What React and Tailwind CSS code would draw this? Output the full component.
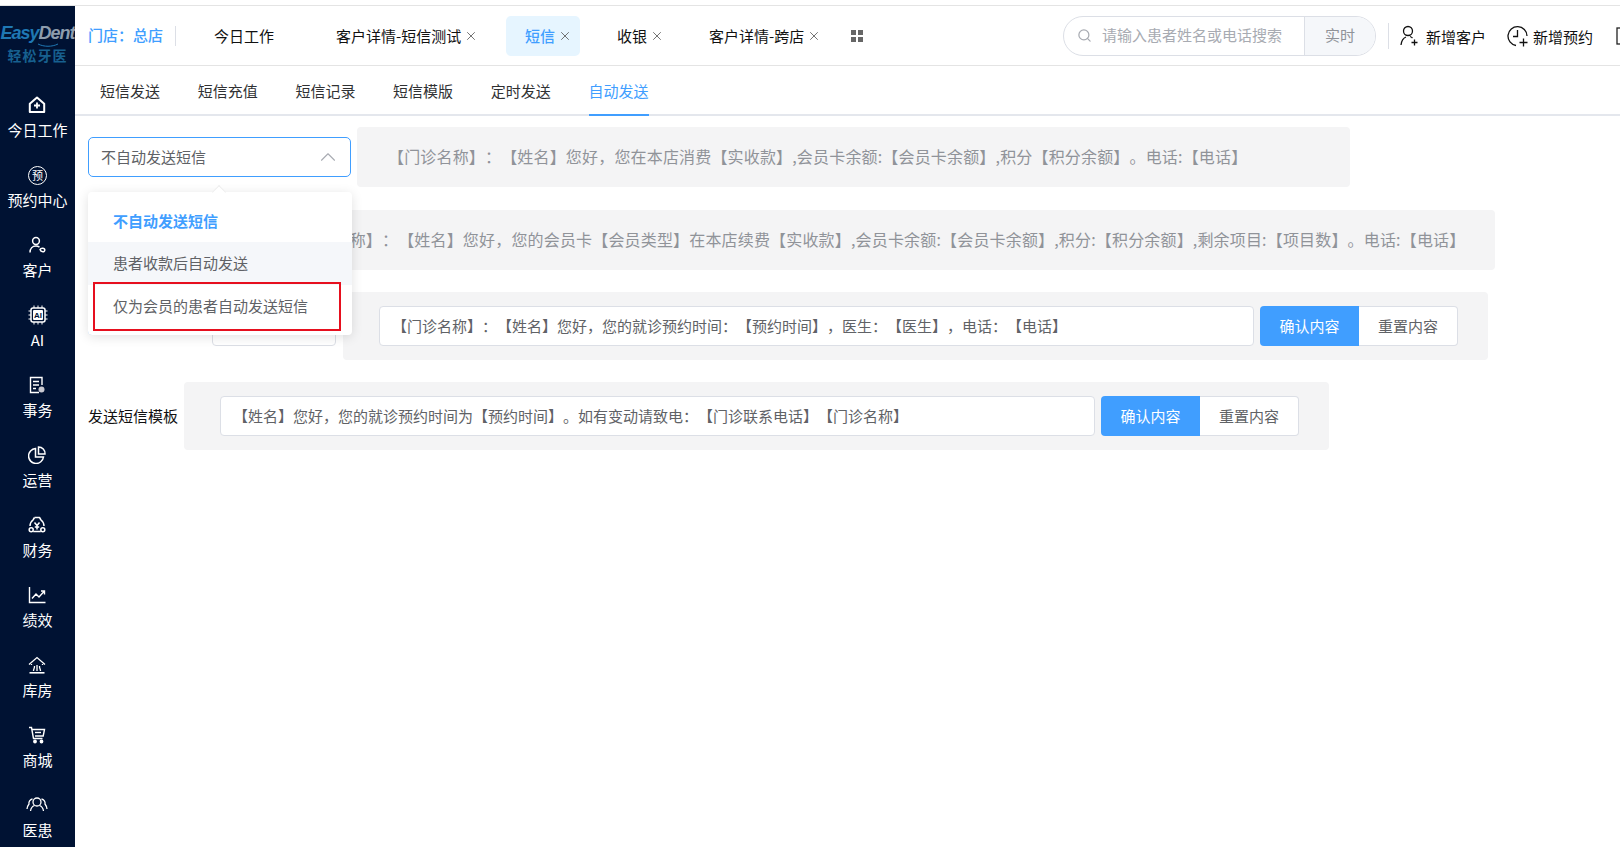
import { X, Search, ChevronUp } from 'lucide-react';

const HomeIcon = () => (
  <svg width="18" height="18" viewBox="0 0 18 18" fill="none" stroke="currentColor" strokeWidth="2">
    <path d="M9 1.500 1.800 7.800V16h14.400V7.800Z" strokeLinejoin="round"/>
    <path d="M9 6.500v6M6 9.500h6" strokeWidth="1.800"/>
  </svg>
);

const BookIcon = () => (
  <span className="w-[19px] h-[19px] rounded-full border border-white text-[11px] leading-[17px] text-center">预</span>
);

const CustomerIcon = () => (
  <svg width="18" height="18" viewBox="0 0 18 18" fill="none" stroke="currentColor" strokeWidth="1.500">
    <circle cx="8" cy="5" r="3.400"/>
    <path d="M2 16.500C2 12.500 4.500 10 8 10c1.500 0 2.500.5 3.500 1.200"/>
    <path d="M12 13.500c.8-1.800 4.800-1.800 4.800.5s-3.800 2.300-4.800-.5Z"/>
  </svg>
);

const AiIcon = () => (
  <svg width="20" height="20" viewBox="0 0 20 20" fill="none" stroke="currentColor">
    <rect x="3" y="3" width="14" height="14" rx="2" strokeWidth="1.500"/>
    <path d="M6 .5V3M10 .5V3M14 .5V3M6 17v2.500M10 17v2.500M14 17v2.500M.5 6H3M.5 10H3M.5 14H3M17 6h2.500M17 10h2.500M17 14h2.500" strokeWidth="1"/>
    <rect x="5" y="5" width="10" height="10" rx="1" fill="currentColor" stroke="none"/>
    <text x="10" y="13.200" textAnchor="middle" fontSize="8" fontWeight="700" fontFamily="Liberation Sans, sans-serif" fill="#001233" stroke="none">AI</text>
  </svg>
);

const TaskIcon = () => (
  <svg width="18" height="18" viewBox="0 0 18 18" fill="none" stroke="currentColor" strokeWidth="1.400">
    <path d="M11 16.500H2.500V1.500H14V9"/>
    <path d="M5 5.500h6M5 9h6M5 12.500h3"/>
    <circle cx="13.500" cy="13.500" r="3" fill="#c8c8d0" stroke="none"/>
  </svg>
);

const PieIcon = () => (
  <svg width="18" height="18" viewBox="0 0 18 18" fill="none" stroke="currentColor" strokeWidth="1.500">
    <path d="M7.500 2.500a7.500 7.500 0 1 0 8 8.500H7.500Z"/>
    <path d="M10.500 1a6.500 6.500 0 0 1 6.500 7h-6.500Z"/>
  </svg>
);

const FinanceIcon = () => (
  <svg width="18" height="18" viewBox="0 0 18 18" fill="none" stroke="currentColor" strokeWidth="1.500">
    <path d="M6.500 1.500h5L13 4c2 1.500 3 3.500 3 6" strokeLinejoin="round"/>
    <path d="M6.500 1.500 5 4c-2 1.500-3 3.500-3 6" strokeLinejoin="round"/>
    <path d="M6.500 6.500 9 9.500l2.500-3M9 9.500V13.500M6.800 11h4.400"/>
    <circle cx="3.200" cy="13.800" r="2"/>
    <circle cx="14.800" cy="13.800" r="2"/>
    <path d="M5.200 15.500h7.600"/>
  </svg>
);

const ChartIcon = () => (
  <svg width="18" height="18" viewBox="0 0 18 18" fill="none" stroke="currentColor" strokeWidth="1.400">
    <path d="M1.500 1v15.500h16"/>
    <path d="M4 12.500 8 8l3 3 5-5.500M13 5h3.500v3.500"/>
  </svg>
);

const StoreIcon = () => (
  <svg width="18" height="18" viewBox="0 0 18 18" fill="none" stroke="currentColor" strokeWidth="1.300">
    <path d="M1 8.500 9 1.500l8 7M3.500 8v1M14.500 8v1"/>
    <path d="M5.500 15c0-2 1.200-2.800 1-5M9 15c0-2.500 0-3.500 0-6M12.500 15c0-2-1.200-2.800-1-5"/>
    <path d="M1.500 16.800h15" strokeWidth="1.600"/>
  </svg>
);

const CartIcon = () => (
  <svg width="18" height="18" viewBox="0 0 18 18" fill="none" stroke="currentColor" strokeWidth="1.400">
    <path d="M1 1.500h2.500l2 11h9"/>
    <path d="M4 3.500h12.500l-1.300 6.500H7"/>
    <path d="M7 6.500h6"/>
    <circle cx="7" cy="15.500" r="1.200" fill="currentColor"/>
    <circle cx="13.500" cy="15.500" r="1.200" fill="currentColor"/>
  </svg>
);

const PeopleIcon = () => (
  <svg width="22" height="18" viewBox="0 0 22 18" fill="none" stroke="currentColor" strokeWidth="1.300">
    <circle cx="11" cy="6" r="4"/>
    <path d="M4.500 15c.5-3.500 2.500-5 4-5.500M17.500 15c-.5-3.500-2.500-5-4-5.500"/>
    <path d="M6.500 3C4 3.500 2.500 6 3 8 1.800 9.500 1.200 11 1 13M15.500 3c2.500.5 4 3 3.500 5 1.200 1.500 1.800 3 2 5"/>
  </svg>
);

const MENU = [
  { label: '今日工作', Icon: HomeIcon },
  { label: '预约中心', Icon: BookIcon },
  { label: '客户', Icon: CustomerIcon },
  { label: 'AI', Icon: AiIcon },
  { label: '事务', Icon: TaskIcon },
  { label: '运营', Icon: PieIcon },
  { label: '财务', Icon: FinanceIcon },
  { label: '绩效', Icon: ChartIcon },
  { label: '库房', Icon: StoreIcon },
  { label: '商城', Icon: CartIcon },
  { label: '医患', Icon: PeopleIcon },
];

const TABS = [
  { label: '今日工作', w: 'w-[102px] pl-[19px]' },
  { label: '客户详情-短信测试', close: true, w: 'w-[169px] pl-[19px]' },
  { label: '短信', close: true, active: true, w: 'w-[74px] pl-[19px]' },
  { label: '收银', close: true, w: 'w-[72px] pl-[17px]' },
  { label: '客户详情-跨店', close: true, w: 'w-[139px] pl-[17px]' },
];

const SUBTABS = ['短信发送', '短信充值', '短信记录', '短信模版', '定时发送', '自动发送'];

function Sidebar() {
  return (
    <aside className="w-[75px] shrink-0 bg-[#001233] text-white flex flex-col items-center overflow-hidden">
      <div className="h-[60px] pt-[17px] flex flex-col items-center w-full">
        <div className="text-[18px] leading-[20px] font-bold italic tracking-[-1px] text-[#1f78b4] whitespace-nowrap font-['Liberation_Sans',sans-serif]">Easy<span className="text-[#8d9cad]">Dent</span></div>
        <svg width="75" height="5" viewBox="0 0 75 5" fill="none" stroke="#1f78b4" strokeWidth="1" className="shrink-0">
          <path d="M38 1c6 3 14 3 20 0"/>
        </svg>
        <div className="text-[14px] leading-[15px] tracking-[1px] font-bold text-[#17608f]">轻松牙医</div>
      </div>
      <nav className="w-full flex flex-col items-center pt-[27px] gap-[19px]">
        {MENU.map(({ label, Icon }) => (
          <div key={label} className="flex flex-col items-center h-[51px]">
            <div className="h-[24px] flex items-center justify-center">
              <Icon/>
            </div>
            <span className="text-[15px] leading-[24px] mt-[1px] whitespace-nowrap">{label}</span>
          </div>
        ))}
      </nav>
    </aside>
  );
}

function TopBar() {
  return (
    <header className="h-[60px] shrink-0 border-b border-[#e4e4e4] flex items-center pl-[13px] overflow-hidden">
      <span className="text-[15px] font-medium text-[#409eff] whitespace-nowrap">门店：总店</span>
      <span className="w-px h-[20px] bg-[#dcdfe6] ml-[12px]"/>
      <div className="flex items-center gap-[20px] ml-[19px]">
        {TABS.map(t => (
          <div key={t.label} className={`${t.w} shrink-0 h-[40px] flex items-center gap-[3px] rounded-[5px] text-[15px] whitespace-nowrap ${t.active ? 'bg-[#e6f5ff] text-[#409eff] font-medium' : 'text-[#111]'}`}>
            <span className="pt-[1px]">{t.label}</span>
            {t.close && <X size={14} strokeWidth={1.400} className="text-[#555] shrink-0"/>}
          </div>
        ))}
        <svg width="12" height="12" viewBox="0 0 12 12" fill="#666" className="shrink-0">
          <rect width="5" height="5"/>
          <rect x="7" width="5" height="5"/>
          <rect y="7" width="5" height="5"/>
          <rect x="7" y="7" width="5" height="5"/>
        </svg>
      </div>
      <div className="ml-auto flex items-center shrink-0 mr-[-14px]">
        <div className="w-[313px] h-[40px] rounded-[20px] border border-[#dcdfe6] flex items-center overflow-hidden">
          <Search size={15} className="text-[#a8abb2] ml-[13px]"/>
          <span className="flex-1 ml-[10px] text-[15px] text-[#a8abb2]">请输入患者姓名或电话搜索</span>
          <span className="w-[71px] h-full bg-[#f5f7fa] border-l border-[#dcdfe6] text-[15px] leading-[36px] text-center text-[#909399]">实时</span>
        </div>
        <span className="w-px h-[26px] bg-[#dcdfe6] ml-[12px]"/>
        <div className="flex items-center gap-[7px] ml-[11px] text-[15px] text-[#111] whitespace-nowrap">
          <svg width="19" height="21" viewBox="0 0 19 21" fill="none" stroke="currentColor" strokeWidth="1.300">
            <circle cx="8" cy="6" r="4.500"/>
            <path d="M1 20c.5-4.500 2.500-7 5-8M10 11.500c1 .3 1.800.8 2.500 1.500"/>
            <path d="M14.500 14.500v6M11.500 17.500h6"/>
          </svg>
          <span className="pt-[3px]">新增客户</span>
        </div>
        <div className="flex items-center gap-[3px] ml-[21px] text-[15px] text-[#111] whitespace-nowrap">
          <svg width="23" height="22" viewBox="0 0 23 22" fill="none" stroke="currentColor" strokeWidth="1.300">
            <path d="M9 20.500a9.500 9.500 0 1 1 11-9.500"/>
            <path d="M10.500 5v6.500H6"/>
            <path d="M16.500 13.500v8M12.500 17.500h8"/>
          </svg>
          <span className="pt-[3px]">新增预约</span>
        </div>
        <svg width="18" height="18" viewBox="0 0 18 18" fill="none" stroke="#222" strokeWidth="1.300" className="ml-[23px]">
          <rect x="1" y="1" width="16" height="16"/>
          <path d="M4 6h10M4 10h6"/>
        </svg>
      </div>
    </header>
  );
}

function SubTabs() {
  return (
    <div className="h-[50px] shrink-0 border-b-2 border-[#e4e7ed] flex pl-[25px] gap-[37.7px] text-[15px] text-[#303133]">
      {SUBTABS.map((s, i) => (
        <div key={s} className={`h-[50px] leading-[49px] whitespace-nowrap ${i === 5 ? 'text-[#409eff] border-b-2 border-[#409eff]' : ''}`}>{s}</div>
      ))}
    </div>
  );
}

function Preview({ className, children }) {
  return <div className={`h-[60px] pb-[2px] rounded-[4px] bg-[#f4f4f5] flex items-center text-[16px] tracking-[0.17px] text-[#909399] whitespace-nowrap ${className}`}>{children}</div>;
}

function Editor({ value, className }) {
  return (
    <div className={`w-[1145px] h-[68px] shrink-0 rounded-[4px] bg-[#f4f4f5] flex items-center pl-[36px] ${className}`}>
      <div className="w-[875px] h-[40px] bg-white border border-[#dcdfe6] rounded-[4px] flex items-center px-[12px] text-[15px] text-[#606266] whitespace-nowrap">{value}</div>
      <button className="ml-[6px] w-[99px] h-[40px] bg-[#409eff] text-white text-[15px] rounded-l-[4px]">确认内容</button>
      <button className="w-[99px] h-[40px] bg-white border border-[#dcdfe6] border-l-0 text-[#606266] text-[15px] rounded-r-[4px]">重置内容</button>
    </div>
  );
}

function Dropdown() {
  return (
    <div className="absolute left-[88px] top-[192px] w-[264px] h-[143px] bg-white rounded-[4px] shadow-[0_2px_12px_rgba(0,0,0,0.12)] pt-[7px] z-10">
      <div className="absolute -top-[5px] left-[126px] w-[10px] h-[10px] bg-white rotate-45 border-l border-t border-[#eeeeee]"/>
      <div className="h-[43px] leading-[43px] px-[25px] text-[15px] font-bold text-[#409eff]">不自动发送短信</div>
      <div className="h-[43px] leading-[41px] px-[25px] text-[15px] text-[#606266] bg-[#f5f7fa]">患者收款后自动发送</div>
      <div className="h-[43px] leading-[41px] px-[25px] text-[15px] text-[#606266]">仅为会员的患者自动发送短信</div>
      <div className="absolute left-[5px] top-[90px] w-[248px] h-[49px] border-2 border-[#e60f1e]"/>
    </div>
  );
}

export default function App() {
  return (
    <div className="relative w-[1620px] h-[847px] bg-white overflow-hidden pt-[5px] [text-spacing-trim:space-all] font-['Noto_Sans_CJK_SC','Noto_Sans',sans-serif]">
      <div className="h-full border-t border-[#e4e4e4] flex">
        <Sidebar/>
        <main className="flex-1 min-w-0 flex flex-col">
          <TopBar/>
          <SubTabs/>
          <div className="pl-[13px] pt-[11px]">
            <div className="flex items-center gap-[6px]">
              <div className="w-[263px] h-[40px] rounded-[5px] border border-[#409eff] flex items-center justify-between pl-[12px] pr-[9px] text-[15px] text-[#606266]">
                不自动发送短信
                <ChevronUp size={26} strokeWidth={1} className="text-[#a8abb2]"/>
              </div>
              <Preview className="w-[993px] pl-[31px]">【门诊名称】：【姓名】您好，您在本店消费【实收款】,会员卡余额:【会员卡余额】,积分【积分余额】。电话:【电话】</Preview>
            </div>
            <Preview className="w-[1274px] mt-[23px] ml-[133px] pl-[64px] overflow-hidden">【门诊名称】：【姓名】您好，您的会员卡【会员类型】在本店续费【实收款】,会员卡余额:【会员卡余额】,积分:【积分余额】,剩余项目:【项目数】。电话:【电话】</Preview>
            <div className="mt-[22px] flex items-center">
              <div className="w-[120px] h-[40px] self-start mt-[3px] border border-[#409eff] rounded-[4px] shrink-0"/>
              <div className="w-[124px] h-[40px] ml-[4px] border border-[#dcdfe6] rounded-[4px] shrink-0"/>
              <Editor className="ml-[7px]" value="【门诊名称】：【姓名】您好，您的就诊预约时间：【预约时间】，医生：【医生】，电话：【电话】"/>
            </div>
            <div className="mt-[22px] flex items-center">
              <span className="text-[15px] text-[#111] whitespace-nowrap w-[96px]">发送短信模板</span>
              <Editor value="【姓名】您好，您的就诊预约时间为【预约时间】。如有变动请致电：【门诊联系电话】【门诊名称】"/>
            </div>
          </div>
        </main>
      </div>
      <Dropdown/>
    </div>
  );
}
